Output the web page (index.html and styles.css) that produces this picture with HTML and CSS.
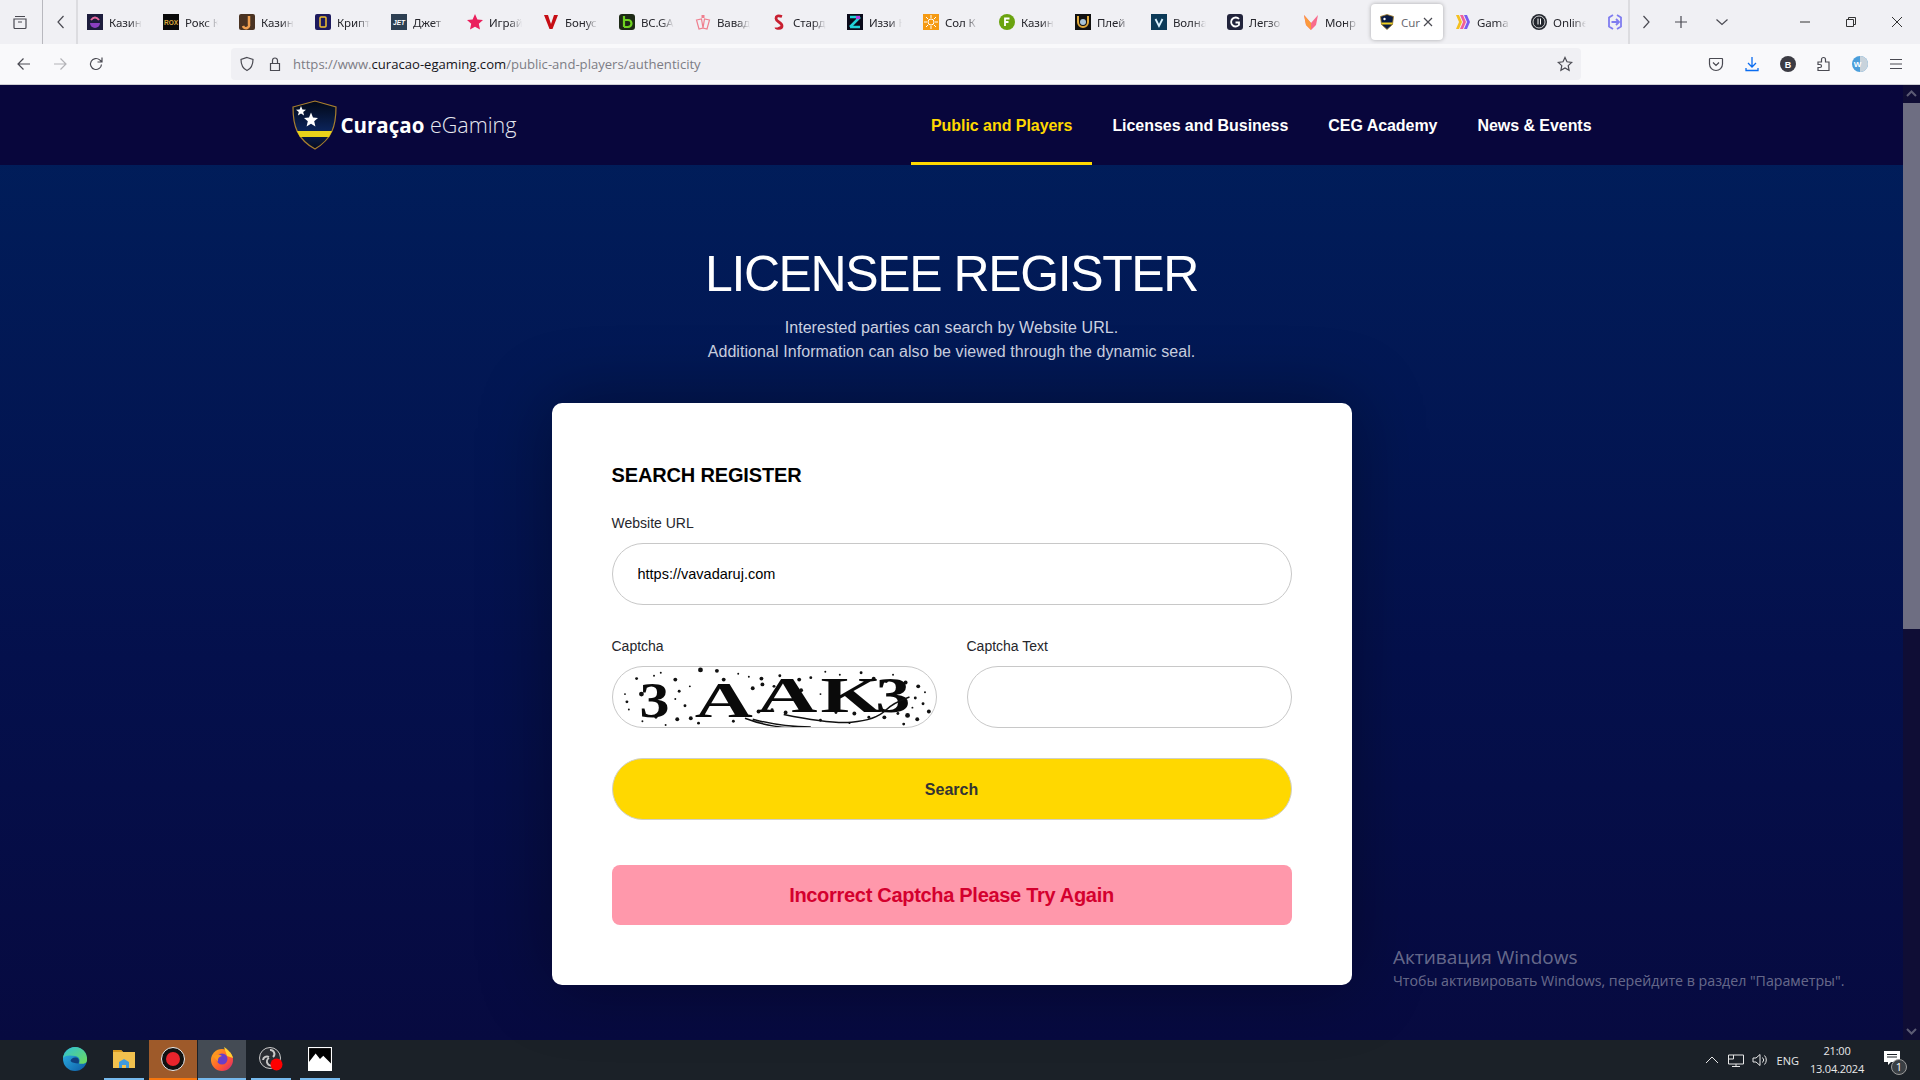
FILE: index.html
```html
<!DOCTYPE html>
<html lang="ru">
<head>
<meta charset="utf-8">
<title>Curaçao eGaming</title>
<link rel="stylesheet" href="styles.css">
</head>
<body>
<div class="screen">
  <div class="tabstrip">
    <div class="tabs-left">
      <svg class="ic" viewBox="0 0 16 16"><path d="M3 2.500h10M2 5h12v8.500a1 1 0 0 1-1 1H3a1 1 0 0 1-1-1zM6 8h4" class="st"/></svg>
    </div>
    <div class="tabs-scroll">
      <svg class="ic" viewBox="0 0 16 16"><path d="M10.500 2 5 8l5.500 6" class="st"/></svg>
    </div>
    <div class="tabs">
      <div class="tab"><svg class="fav" viewBox="0 0 16 16"><rect width="16" height="16" fill="#1c1c3c"/><path d="M3 9h10a5 5 0 0 1-10 0z" fill="#8a3fc0"/><path d="M4 6q4-5 8 0" fill="none" stroke="#e86aa0" stroke-width="2"/></svg><span class="tab-label">Казин</span></div>
      <div class="tab"><svg class="fav" viewBox="0 0 16 16"><rect width="16" height="16" fill="#0a0a0a"/><text x="8" y="10.500" class="fav-rox">ROX</text></svg><span class="tab-label">Рокс К</span></div>
      <div class="tab"><svg class="fav" viewBox="0 0 16 16"><rect width="16" height="16" rx="2" fill="#4a3322"/><path d="M10 2v8a3 3 0 0 1-6 2" fill="none" stroke="#f0a050" stroke-width="2.500"/></svg><span class="tab-label">Казин</span></div>
      <div class="tab"><svg class="fav" viewBox="0 0 16 16"><rect width="16" height="16" rx="2" fill="#1d1a5e"/><rect x="5" y="3" width="6" height="10" rx="1" fill="none" stroke="#f2c230" stroke-width="1.500"/></svg><span class="tab-label">Крипт</span></div>
      <div class="tab"><svg class="fav" viewBox="0 0 16 16"><rect width="16" height="16" fill="#2d3f52"/><text x="8" y="10.500" class="fav-jet">JET</text></svg><span class="tab-label">Джет</span></div>
      <div class="tab"><svg class="fav" viewBox="0 0 16 16"><path d="M8 0l2.400 5.400 5.600.6-4.200 3.800 1.200 5.800L8 12.700 3 15.600l1.200-5.800L0 6l5.600-.6z" fill="#ea1f5c"/></svg><span class="tab-label">Играй</span></div>
      <div class="tab"><svg class="fav" viewBox="0 0 16 16"><path d="M1 1h4l3 9 3-9h4L9.500 15h-3z" fill="#c60d14"/></svg><span class="tab-label">Бонус</span></div>
      <div class="tab"><svg class="fav" viewBox="0 0 16 16"><rect width="16" height="16" rx="3" fill="#1d2a16"/><path d="M5 2v11M5 6h4a3.500 3.500 0 0 1 0 7H5" fill="none" stroke="#6ed320" stroke-width="2.200"/></svg><span class="tab-label">BC.GA</span></div>
      <div class="tab"><svg class="fav" viewBox="0 0 16 16"><path d="M1.500 6l5-1 1.500 9-4 1zM14.500 6l-5-1-1.500 9 4 1z" fill="none" stroke="#ef7f8e" stroke-width="1.200"/><rect x="6.500" y="1" width="3" height="3" fill="#ef7f8e"/></svg><span class="tab-label">Вавад</span></div>
      <div class="tab"><svg class="fav" viewBox="0 0 16 16"><path d="M11 2.500Q5 .5 5 4.500c0 3.500 6 3.500 6 7.500 0 3.500-6 2.500-6 1.500" fill="none" stroke="#c81f30" stroke-width="2.800"/></svg><span class="tab-label">Стард</span></div>
      <div class="tab"><svg class="fav" viewBox="0 0 16 16"><rect width="16" height="16" fill="#0a0a1a"/><path d="M3 3h10M13 3 3 13M3 13h10" stroke="#21d2d8" stroke-width="2.500" fill="none"/><rect x="9" y="2" width="4" height="3" fill="#b53be0"/></svg><span class="tab-label">Иззи К</span></div>
      <div class="tab"><svg class="fav" viewBox="0 0 16 16"><rect width="16" height="16" fill="#f59a12"/><circle cx="8" cy="8" r="3" fill="none" stroke="#fff"/><path d="M8 1v3M8 12v3M1 8h3M12 8h3M3 3l2 2M11 11l2 2M13 3l-2 2M5 11l-2 2" stroke="#fff"/></svg><span class="tab-label">Сол К</span></div>
      <div class="tab"><svg class="fav" viewBox="0 0 16 16"><circle cx="8" cy="8" r="8" fill="#6aa30f"/><path d="M6 12V4.500h4.500M6 8h3.500" stroke="#fff" stroke-width="1.800" fill="none"/></svg><span class="tab-label">Казин</span></div>
      <div class="tab"><svg class="fav" viewBox="0 0 16 16"><rect width="16" height="16" fill="#111"/><path d="M3 2v6a5 5 0 0 0 10 0V2" fill="none" stroke="#e0a93a" stroke-width="2"/><circle cx="8" cy="8" r="3" fill="#a9c4d6"/></svg><span class="tab-label">Плей</span></div>
      <div class="tab"><svg class="fav" viewBox="0 0 16 16"><rect width="16" height="16" fill="#0c3a58"/><path d="M4.500 5l3.500 7 3.500-7" stroke="#d9f2ff" stroke-width="1.800" fill="none"/></svg><span class="tab-label">Волна</span></div>
      <div class="tab"><svg class="fav" viewBox="0 0 16 16"><rect width="16" height="16" rx="3" fill="#22243c"/><path d="M12 5a4.500 4.500 0 1 0 0 6V8.500H8.500" fill="none" stroke="#fff" stroke-width="1.800"/></svg><span class="tab-label">Легзо</span></div>
      <div class="tab"><svg class="fav" viewBox="0 0 16 16"><path d="M1 1l7 8 7-8-2 10-5 5-5-5z" fill="#f86b8c"/><path d="M1 1l7 8v7l-5-5z" fill="#fb9a3c"/></svg><span class="tab-label">Монр</span></div>
      <div class="tab tab-active"><svg class="fav" viewBox="0 0 16 16"><path d="M1.500 2.500 8 .5l6.500 2-1 8L8 15.500l-5.500-5z" fill="#0b1c44" stroke="#a6802a" stroke-width=".8"/><rect x="2.500" y="8.500" width="11" height="2" fill="#f0d020"/><circle cx="5.500" cy="5" r="1.200" fill="#fff"/></svg><span class="tab-label tab-label-short">Cur</span><svg class="tab-close" viewBox="0 0 12 12"><path d="M2 2l8 8M10 2l-8 8" class="st"/></svg></div>
      <div class="tab"><svg class="fav" viewBox="0 0 16 16"><path d="M1 1h3l3 7-3 7H1l3-7z" fill="#f4c020"/><path d="M5 1h3l3 7-3 7H5l3-7z" fill="#f0609a"/><path d="M9 1h3l3 7-3 7H9l3-7z" fill="#7a5cf0"/></svg><span class="tab-label">Gama</span></div>
      <div class="tab"><svg class="fav" viewBox="0 0 16 16"><circle cx="8" cy="8" r="8" fill="#23262e"/><circle cx="8" cy="8" r="6" fill="none" stroke="#fff" stroke-width=".8"/><path d="M7 4.500v6M9.500 4.500v6" stroke="#fff"/></svg><span class="tab-label">Online</span></div>
      <div class="tab tab-last"><svg class="fav" viewBox="0 0 16 16"><path d="M6 1 2 3.500v9L6 15M10 1l4 2.500v9L10 15M4.500 8h7M9 5l3 3-3 3" fill="none" stroke="#7f7cf0" stroke-width="1.800"/></svg></div>
    </div>
    <div class="tabs-right">
      <svg class="ic" viewBox="0 0 16 16"><path d="M5.500 2 11 8l-5.500 6" class="st"/></svg>
      <svg class="ic ic-plus" viewBox="0 0 16 16"><path d="M8 2v12M2 8h12" class="st"/></svg>
      <svg class="ic" viewBox="0 0 16 16"><path d="M2.500 5.500 8 10.500l5.500-5" class="st"/></svg>
    </div>
    <div class="win-controls">
      <svg class="win-ic" viewBox="0 0 12 12"><path d="M1 6h10" class="st-dark"/></svg>
      <svg class="win-ic" viewBox="0 0 12 12"><path d="M1.500 3.500h7v7h-7zM3.500 3.500v-2h7v7h-2" class="st-dark"/></svg>
      <svg class="win-ic" viewBox="0 0 12 12"><path d="M1 1l10 10M11 1 1 11" class="st-dark"/></svg>
    </div>
  </div>

  <div class="toolbar">
    <div class="nav-btns">
      <svg class="ic" viewBox="0 0 16 16"><path d="M14 8H2M7.500 2.500 2 8l5.500 5.500" class="st"/></svg>
      <svg class="ic ic-off" viewBox="0 0 16 16"><path d="M2 8h12M8.500 2.500 14 8l-5.500 5.500" class="st"/></svg>
      <svg class="ic" viewBox="0 0 16 16"><path d="M13.500 8.500a5.500 5.500 0 1 1-1.800-4.600L14 6M14 1.500V6H9.500" class="st"/></svg>
    </div>
    <div class="urlbar">
      <svg class="ic" viewBox="0 0 16 16"><path d="M8 1.500 14 3.500c0 5.500-1.500 9-6 11-4.500-2-6-5.500-6-11z" class="st"/></svg>
      <svg class="ic" viewBox="0 0 16 16"><path d="M3.500 7.500h9v7h-9zM5.500 7.500V4.500a2.500 2.500 0 0 1 5 0v3" class="st"/></svg>
      <span class="url"><span class="url-dim">https://www.</span>curacao-egaming.com<span class="url-dim">/public-and-players/authenticity</span></span>
      <svg class="ic star" viewBox="0 0 16 16"><path d="M8 1.500l2 4.300 4.700.6-3.500 3.200.9 4.700L8 12l-4.100 2.300.9-4.700L1.300 6.400 6 5.800z" class="st"/></svg>
    </div>
    <div class="tools">
      <svg class="ic" viewBox="0 0 16 16"><path d="M2 2.500h12a.5.500 0 0 1 .5.500v5a6.500 6.500 0 0 1-13 0V3a.5.500 0 0 1 .5-.500zM5 6.500l3 3 3-3" class="st"/></svg>
      <svg class="ic" viewBox="0 0 16 16"><path d="M8 1v10M4 7l4 4 4-4M2 12v2.500h12V12" class="st-blue"/></svg>
      <svg class="ic" viewBox="0 0 16 16"><circle cx="8" cy="8" r="8" fill="#3c3c44"/><text x="8" y="11.500" class="b-text">B</text></svg>
      <svg class="ic" viewBox="0 0 16 16"><path d="M2 6h3.500V3.500a2 2 0 0 1 4 0V6H13v8.500H2v-3h2a1.500 1.500 0 0 0 0-3H2z" class="st"/></svg>
      <svg class="ic" viewBox="0 0 16 16"><circle cx="8" cy="8" r="8" fill="#4a9edb"/><path d="M8 0a8 8 0 0 1 0 16z" fill="#c8d3dc"/><text x="5.500" y="11" class="w-text">W</text></svg>
      <svg class="ic" viewBox="0 0 16 16"><path d="M2 3.500h12M2 8h12M2 12.500h12" class="st"/></svg>
    </div>
  </div>

  <div class="viewport">
    <div class="page">
      <header class="site-header">
        <div class="site-inner">
          <div class="logo">
            <svg class="shield" viewBox="0 0 45 50">
              <defs>
                <linearGradient id="sh" x1="0" y1="0" x2="0" y2="1"><stop offset="0" stop-color="#020817"/><stop offset=".6" stop-color="#0b2358"/><stop offset="1" stop-color="#060a20"/></linearGradient>
              </defs>
              <path d="M1 7 23 1l21 6c0 19-4 32-21 42C5 39 1 26 1 7z" fill="url(#sh)" stroke="#a87f2e" stroke-width="1.200"/>
              <path d="M5 31h35l-3 6H8z" fill="#e9d21a"/>
              <path d="M9 6 10.400 9.500 14 9.800 11.200 12 12.100 15.500 9 13.600 5.900 15.500 6.800 12 4 9.800 7.600 9.500z" fill="#fff"/>
              <path d="M19 12.500 21 17.500 26 18 22.200 21.300 23.400 26.500 19 23.700 14.600 26.500 15.800 21.300 12 18 17 17.500z" fill="#fff"/>
            </svg>
            <span class="logo-text"><b>Curaçao</b> eGaming</span>
          </div>
          <nav class="site-nav">
            <a class="nav-item nav-active">Public and Players</a>
            <a class="nav-item">Licenses and Business</a>
            <a class="nav-item">CEG Academy</a>
            <a class="nav-item">News &amp; Events</a>
          </nav>
        </div>
      </header>
      <main class="hero">
        <h1 class="hero-title">LICENSEE REGISTER</h1>
        <p class="hero-sub">Interested parties can search by Website URL.<br>Additional Information can also be viewed through the dynamic seal.</p>
        <section class="card">
          <h2 class="card-title">SEARCH REGISTER</h2>
          <label class="label">Website URL</label>
          <input class="field" type="text" value="https://vavadaruj.com">
          <div class="captcha-row">
            <div class="captcha-col">
              <label class="label">Captcha</label>
              <div class="captcha">
                <svg class="captcha-svg" viewBox="0 0 325 62">
                  <g class="dots">
                    <circle cx="20" cy="12" r="1.500"/><circle cx="38" cy="9" r="1"/><circle cx="60" cy="13" r="2"/><circle cx="86" cy="3" r="2.500"/><circle cx="103" cy="4" r="2"/><circle cx="110" cy="13" r="2"/><circle cx="136" cy="10" r="1"/><circle cx="149" cy="12" r="2"/><circle cx="168" cy="9" r="1.500"/><circle cx="188" cy="13" r="2"/><circle cx="200" cy="11" r="1.500"/><circle cx="230" cy="8" r="1"/><circle cx="252" cy="6" r="1.500"/><circle cx="265" cy="12" r="2"/><circle cx="278" cy="15" r="1.500"/><circle cx="298" cy="16" r="2"/><circle cx="311" cy="20" r="2"/><circle cx="8" cy="28" r="1"/><circle cx="25" cy="28" r="2.500"/><circle cx="64" cy="25" r="1.500"/><circle cx="70" cy="40" r="1.500"/><circle cx="140" cy="22" r="2"/><circle cx="150" cy="18" r="2"/><circle cx="162" cy="20" r="1.500"/><circle cx="190" cy="24" r="2"/><circle cx="210" cy="28" r="1"/><circle cx="290" cy="24" r="2"/><circle cx="308" cy="32" r="1.500"/><circle cx="316" cy="38" r="1.500"/><circle cx="12" cy="44" r="1"/><circle cx="40" cy="52" r="1.500"/><circle cx="62" cy="54" r="2"/><circle cx="76" cy="53" r="2"/><circle cx="84" cy="58" r="1.500"/><circle cx="146" cy="46" r="2"/><circle cx="160" cy="44" r="1.500"/><circle cx="174" cy="47" r="2"/><circle cx="190" cy="41" r="1.500"/><circle cx="226" cy="47" r="1.500"/><circle cx="245" cy="48" r="2"/><circle cx="260" cy="52" r="1.500"/><circle cx="276" cy="52" r="2"/><circle cx="290" cy="48" r="1.500"/><circle cx="300" cy="50" r="2.500"/><circle cx="310" cy="54" r="2"/><circle cx="296" cy="59" r="1.500"/><circle cx="322" cy="46" r="2"/><circle cx="26" cy="56" r="1"/><circle cx="50" cy="60" r="1"/><circle cx="120" cy="56" r="1.500"/><circle cx="210" cy="55" r="1.500"/><circle cx="240" cy="58" r="1"/><circle cx="45" cy="6" r="1"/><circle cx="125" cy="7" r="1"/><circle cx="215" cy="5" r="1"/><circle cx="285" cy="8" r="1"/><circle cx="10" cy="36" r="1.500"/><circle cx="60" cy="33" r="1"/><circle cx="75" cy="20" r="1"/><circle cx="305" cy="42" r="1"/><circle cx="318" cy="26" r="1"/>
                  </g>
                  <g class="captcha-letters">
                    <text x="23" y="52" textLength="31" lengthAdjust="spacingAndGlyphs">3</text>
                    <text x="80" y="52" textLength="60" lengthAdjust="spacingAndGlyphs">A</text>
                    <text x="144" y="47" textLength="63" lengthAdjust="spacingAndGlyphs">A</text>
                    <text x="210" y="47" textLength="63" lengthAdjust="spacingAndGlyphs">K</text>
                    <text x="267" y="46" textLength="36" lengthAdjust="spacingAndGlyphs">3</text>
                  </g>
                  <path class="captcha-curve" d="M132 53q30 12 75 10M172 49q50 10 70 8 25-2 35-12 8-8 25-14M140 54q30 8 60 8"/>
                </svg>
              </div>
            </div>
            <div class="captcha-col">
              <label class="label">Captcha Text</label>
              <input class="field" type="text">
            </div>
          </div>
          <button class="search-btn" type="button">Search</button>
          <div class="error">Incorrect Captcha Please Try Again</div>
        </section>
      </main>
      <div class="activation">
        <div class="activation-title">Активация Windows</div>
        <div class="activation-text">Чтобы активировать Windows, перейдите в раздел "Параметры".</div>
      </div>
    </div>
    <div class="scrollbar">
      <svg class="sb-arrow" viewBox="0 0 17 18"><path d="M4 11l4.500-4.500L13 11" class="st-sb"/></svg>
      <div class="sb-thumb"></div>
      <svg class="sb-arrow sb-arrow-down" viewBox="0 0 17 18"><path d="M4 7l4.500 4.500L13 7" class="st-sb"/></svg>
    </div>
  </div>

  <footer class="taskbar">
    <div class="task-apps">
      <div class="task-app task-edge"><svg class="task-ic" viewBox="0 0 24 24"><defs><linearGradient id="ed" x1="0" y1="0" x2="1" y2="1"><stop offset="0" stop-color="#2fb8e8"/><stop offset="1" stop-color="#0c59a4"/></linearGradient><linearGradient id="eg" x1="0" y1="0" x2="1" y2="1"><stop offset="0" stop-color="#2fc0d8"/><stop offset="1" stop-color="#6fdc58"/></linearGradient></defs><circle cx="12" cy="12" r="12" fill="url(#ed)"/><path d="M12 0a12 12 0 0 1 12 13c0 3.500-4 4.500-8 3.500 1.500-3 .5-6.500-3.500-7.500C7 8 2 8 0 11 1 5 6 0 12 0z" fill="url(#eg)"/><path d="M7.500 14c.5-2.500 3-4 5.500-3.500 3 .5 3.500 3.500 2.500 6C12 16 9 16 7.500 14z" fill="#10407e"/></svg></div>
      <div class="task-app task-run"><svg class="task-ic" viewBox="0 0 24 24"><path d="M1 3h8l2 2h12v16H1z" fill="#f2c14e"/><path d="M1 3h8l2 2H1z" fill="#d99a1f"/><path d="M7 21v-6l5-3 5 3v6h-3v-3h-4v3z" fill="#3f9ae0"/></svg></div>
      <div class="task-app task-rec"><svg class="task-ic" viewBox="0 0 24 24"><circle cx="12" cy="12" r="11.500" fill="#111" stroke="#eee" stroke-width="1"/><circle cx="12" cy="12" r="7" fill="#e8242c"/></svg></div>
      <div class="task-app task-fx"><svg class="task-ic" viewBox="0 0 24 24"><defs><linearGradient id="fx" x1="0" y1="0" x2="1" y2="1"><stop offset="0" stop-color="#ffb21a"/><stop offset=".6" stop-color="#ff5a2e"/><stop offset="1" stop-color="#d6217d"/></linearGradient></defs><circle cx="12" cy="13" r="11" fill="url(#fx)"/><path d="M14 0c3 2 8 6 9 11L17 9z" fill="#ffcf30"/><circle cx="12" cy="12" r="5.500" fill="#6a3ec8"/><path d="M3 9q6-3 9 0-5 1-4 6z" fill="#ff9a1e"/></svg></div>
      <div class="task-app task-run"><svg class="task-ic" viewBox="0 0 24 24"><circle cx="11" cy="11" r="10.500" fill="#2a2d33" stroke="#c9c9c9" stroke-width="1"/><path d="M11 3a4 4 0 0 1 3 7M4 13a4 4 0 0 1 6-3M14 18a4 4 0 0 1-4-7" fill="none" stroke="#c9c9c9" stroke-width="2"/><circle cx="17.500" cy="17.500" r="6" fill="#f00"/></svg></div>
      <div class="task-app task-run task-photos"><svg class="task-ic" viewBox="0 0 22 22"><rect x=".5" y=".5" width="21" height="21" fill="#000" stroke="#fff"/><path d="M0 22V15L7 6l4 5 3-3 8 8v6z" fill="#fff"/></svg></div>
    </div>
    <div class="tray">
      <svg class="tray-ic" viewBox="0 0 16 16"><path d="M2 11l6-6 6 6" class="st-tray"/></svg>
      <svg class="tray-ic" viewBox="0 0 16 16"><path d="M.5 3H15.500V12H.5zM8 12v2.500M4 14.500h8M5.500 3v4H.5" class="st-tray"/></svg>
      <svg class="tray-ic" viewBox="0 0 16 16"><path d="M1 6h3l4-3.500v11L4 10H1zM10.500 5.500a3.500 3.500 0 0 1 0 5M12.500 3.500a6.500 6.500 0 0 1 0 9" class="st-tray"/></svg>
      <span class="tray-lang">ENG</span>
      <div class="tray-clock"><span>21:00</span><span>13.04.2024</span></div>
      <div class="tray-note">
        <svg class="note-ic" viewBox="0 0 16 16"><path d="M0 1h16v11H7l-3 3v-3H0z" fill="#fff"/><path d="M3 4.500h10M3 7h10" stroke="#1b2127"/></svg>
        <span class="note-badge">1</span>
      </div>
    </div>
  </footer>
</div>
</body>
</html>
```

FILE: styles.css
```css
* { box-sizing: border-box; }
html, body { margin: 0; height: 100%; overflow: hidden; }
body { font-family: "Liberation Sans", Arial, sans-serif; }
.screen { width: 1920px; height: 1080px; display: flex; flex-direction: column; }

.st { fill: none; stroke: #4a4a52; stroke-width: 1.200; }
.st-blue { fill: none; stroke: #0a6cf0; stroke-width: 1.300; }
.st-dark { fill: none; stroke: #333; stroke-width: 1; }
.st-sb { fill: none; stroke: #5c5c74; stroke-width: 2; }
.st-tray { fill: none; stroke: #e8e8e8; stroke-width: 1; }
.ic { width: 16px; height: 16px; flex: none; display: block; }
.ic-off { opacity: .4; }
.b-text { font: bold 9px "Liberation Sans", sans-serif; fill: #fff; text-anchor: middle; }
.w-text { font: bold 8px "Liberation Sans", sans-serif; fill: #fff; text-anchor: middle; }
.fav-rox { font: bold 6.500px "Liberation Sans", sans-serif; fill: #d8a83c; text-anchor: middle; }
.fav-jet { font: italic bold 6.500px "Liberation Sans", sans-serif; fill: #fff; text-anchor: middle; }

.tabstrip { height: 44px; background: #f0f0f4; display: flex; align-items: center; flex: none; }
.tabs-left { width: 43px; height: 44px; padding-left: 12px; display: flex; align-items: center; border-right: 1px solid #b8b8be; }
.tabs-scroll { width: 35px; height: 44px; padding-left: 10px; display: flex; align-items: center; border-right: 2px solid #dcdce0; }
.tabs { display: flex; width: 1551px; height: 44px; align-items: center; }
.tab { width: 76px; height: 36px; padding-left: 9px; display: flex; align-items: center; gap: 6px; flex: none; border-radius: 4px; }
.fav { width: 16px; height: 16px; flex: none; display: block; }
.tab-label { width: 42px; white-space: nowrap; font: 11.500px "Noto Sans", "Open Sans", sans-serif; letter-spacing: -.1px; color: #26262c;
  -webkit-mask-image: linear-gradient(90deg, #000 20px, transparent 33px); mask-image: linear-gradient(90deg, #000 20px, transparent 33px); }
.tab-active { width: 72px; margin: 0 3px 0 1px; padding-left: 8px; background: #fff; box-shadow: 0 0 4px rgba(0,0,0,.3); }
.tab-label-short { width: 20px; -webkit-mask-image: none; mask-image: none; color: #6a6a72; }
.tab-close { width: 12px; height: 12px; flex: none; margin-left: -5px; }
.tab-last { width: 24px; }
.tabs-right { width: 130px; height: 44px; display: flex; align-items: center; gap: 25px; padding-left: 8px; border-left: 2px solid #dcdce0; margin-left: -1px; }
.ic-plus { margin-left: -6px; }
.win-controls { flex: 1; display: flex; align-items: center; justify-content: flex-end; gap: 34px; padding-right: 17px; }
.win-ic { width: 12px; height: 12px; display: block; }

.toolbar { height: 41px; background: #f9f9fb; border-bottom: 1px solid #cfcfd4; display: flex; align-items: center; flex: none; }
.nav-btns { width: 231px; padding-left: 16px; display: flex; gap: 20px; }
.urlbar { width: 1350px; height: 32px; background: #f0f0f4; border-radius: 4px; display: flex; align-items: center; padding: 0 8px; gap: 12px; }
.url { flex: 1; margin-left: -2px; font: 13.100px "Open Sans", "Noto Sans", sans-serif; color: #15141a; white-space: nowrap; }
.url-dim { color: #7c7c84; }
.tools { flex: 1; display: flex; gap: 20px; justify-content: flex-end; padding-right: 16px; }

.viewport { flex: 1; min-height: 0; display: flex; }
.page { flex: 1; min-width: 0; position: relative; background: linear-gradient(180deg, #001f5c 0, #04104c 60%, #070a40 100%); display: flex; flex-direction: column; }
.site-header { height: 80px; background: #08063c; flex: none; }
.site-inner { width: 1320px; height: 80px; margin: 0 auto; display: flex; align-items: center; justify-content: space-between; }
.logo { display: flex; align-items: center; gap: 4px; }
.shield { width: 45px; height: 50px; display: block; }
.logo-text { font: 300 21.500px "Open Sans", sans-serif; color: #e6e8f0; white-space: nowrap; margin-top: -2px; }
.logo-text b { font-weight: 700; font-size: 20.500px; color: #fff; }
.site-nav { display: flex; height: 80px; }
.nav-item { display: flex; align-items: center; padding: 5px 20px 0; font-size: 16px; letter-spacing: -.05px; font-weight: 700; color: #fff; border-bottom: 3px solid transparent; }
.nav-active { color: #ffd800; border-bottom-color: #ffd800; }

.hero { display: flex; flex-direction: column; align-items: center; padding-top: 79px; }
.hero-title { margin: 0; font-size: 50px; letter-spacing: -1.400px; line-height: 60px; font-weight: 400; color: #fff; }
.hero-sub { margin: 12px 0 39px; font-size: 16px; letter-spacing: .07px; line-height: 24px; text-align: center; color: #ccd2e2; }
.card { width: 800px; height: 582px; padding: 60px; background: #fff; border-radius: 10px; box-shadow: 0 0 70px rgba(0,0,0,.35); display: flex; flex-direction: column; }
.card-title { margin: 0 0 27px; font-size: 20px; letter-spacing: -.15px; line-height: 24px; font-weight: 700; color: #000; }
.label { display: block; margin-bottom: 11px; font-size: 14px; line-height: 18px; color: #26262c; }
.field { display: block; width: 100%; height: 62px; padding: 0 25px; border: 1px solid #c8c8c8; border-radius: 31px; background: #fff; font: 14.500px "Liberation Sans", sans-serif; color: #000; outline: none; }
.captcha-row { display: flex; gap: 30px; margin-top: 32px; }
.captcha-col { flex: 1; min-width: 0; }
.captcha { height: 62px; border: 1px solid #c8c8c8; border-radius: 31px; overflow: hidden; background: #fff; }
.captcha-svg { width: 100%; height: 100%; display: block; filter: blur(.5px); }
.dots { fill: #111; }
.captcha-letters { font: bold 52px "Liberation Serif", serif; fill: #0a0a0a; }
.captcha-curve { fill: none; stroke: #111; stroke-width: 1.500; }
.search-btn { margin-top: 30px; height: 62px; flex: none; padding: 2px 0 0; border: 1px solid #d0d0c8; border-radius: 31px; background: #ffd800; font: 700 16px "Liberation Sans", sans-serif; color: #333; }
.error { margin-top: 45px; height: 60px; flex: none; background: #ff98ab; border-radius: 8px; display: flex; align-items: center; justify-content: center; font-size: 20px; letter-spacing: -.3px; font-weight: 700; color: #d4002e; }

.activation { position: absolute; left: 1393px; top: 859px; color: rgba(255,255,255,.4); font-family: "Open Sans", "Noto Sans", sans-serif; }
.activation-title { font-size: 19px; line-height: 27px; }
.activation-text { font-size: 14.200px; line-height: 20px; white-space: nowrap; }

.scrollbar { width: 17px; flex: none; background: #0f0d35; display: flex; flex-direction: column; }
.sb-arrow { width: 17px; height: 18px; display: block; flex: none; }
.sb-thumb { height: 526px; background: #6e6e82; flex: none; }
.sb-arrow-down { margin-top: auto; }

.taskbar { height: 40px; background: #1b2128; flex: none; display: flex; align-items: stretch; justify-content: space-between; }
.task-apps { display: flex; padding-left: 51px; align-items: stretch; }
.task-app { width: 48px; margin-right: 1px; display: flex; align-items: center; justify-content: center; border-bottom: 2px solid transparent; }
.task-ic { width: 24px; height: 24px; display: block; }
.task-run { border-bottom-color: transparent; position: relative; }
.task-run::after { content: ""; position: absolute; left: 4px; right: 4px; bottom: -2px; height: 2px; background: #76b9ed; }
.task-rec { background: #9e5a2a; border-bottom-color: #f7760d; }
.task-fx { background: #444b54; border-bottom-color: #76b9ed; }
.tray { display: flex; align-items: center; color: #e8e8e8; padding-right: 3px; }
.tray-ic { width: 16px; height: 16px; display: block; margin-right: 8px; }
.tray-lang { font: 11px "Open Sans", "Noto Sans", sans-serif; margin: 0 8px 0 1px; }
.tray-clock { width: 60px; display: flex; flex-direction: column; align-items: center; font: 11px/18px "Open Sans", "Noto Sans", sans-serif; letter-spacing: -.2px; }
.tray-note { position: relative; width: 48px; height: 40px; margin-left: 2px; display: flex; align-items: center; justify-content: center; }
.note-ic { width: 16px; height: 16px; display: block; margin-top: -4px; margin-left: -2px; }
.note-badge { position: absolute; left: 22px; top: 19px; width: 16px; height: 16px; border-radius: 50%; background: #3a3f44; border: 1px solid #9a9a9a; font: 11px/14px "Open Sans", sans-serif; text-align: center; color: #fff; }
```
